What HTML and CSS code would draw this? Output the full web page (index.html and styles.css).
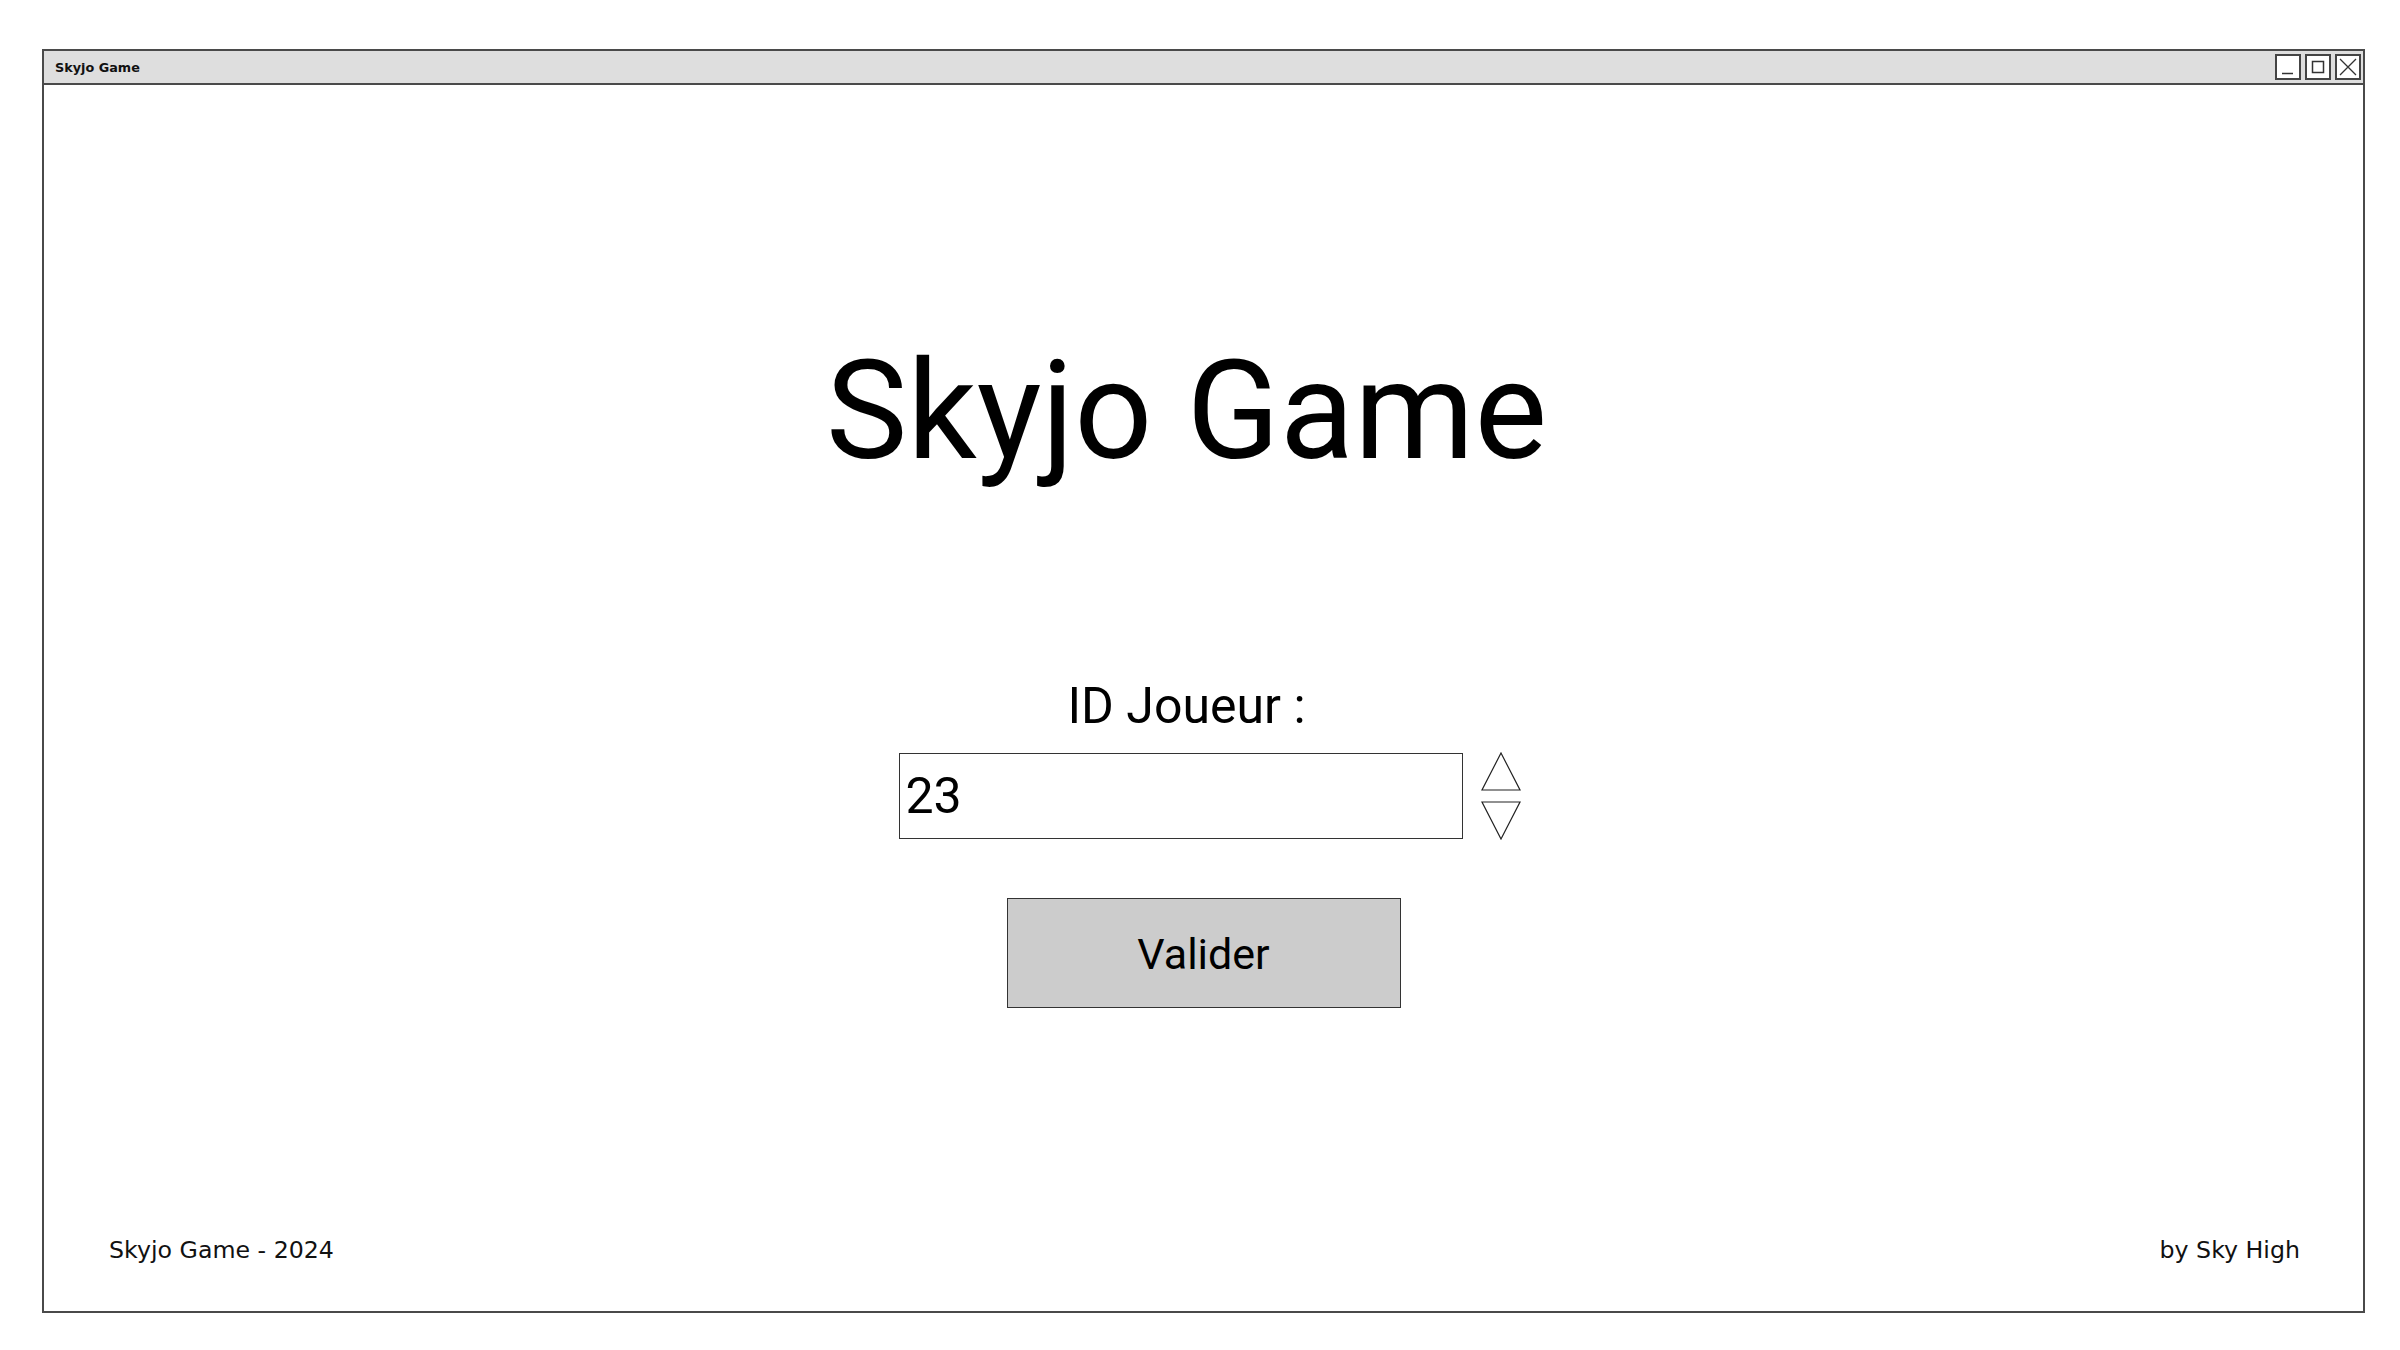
FILE: index.html
```html
<!DOCTYPE html>
<html lang="fr">
<head>
<meta charset="utf-8">
<title>Skyjo Game</title>
<link rel="stylesheet" href="styles.css">
</head>
<body>
<div class="window">
  <div class="titlebar">
    <span class="titlebar-text">Skyjo Game</span>
    <div class="controls">
      <span class="ctrl"><svg width="22" height="22" viewBox="0 0 22 22"><path d="M5 17.5 H16" stroke="#333" stroke-width="1.5" fill="none"/></svg></span>
      <span class="ctrl"><svg width="22" height="22" viewBox="0 0 22 22"><rect x="5.5" y="5.5" width="11" height="11" stroke="#333" stroke-width="1.5" fill="none"/></svg></span>
      <span class="ctrl"><svg width="22" height="22" viewBox="0 0 22 22"><path d="M3 3 L19 19 M19 3 L3 19" stroke="#333" stroke-width="1.3" fill="none"/></svg></span>
    </div>
  </div>
  <div class="content">
    <h1 class="title">Skyjo Game</h1>
    <div class="label">ID Joueur :</div>
    <div class="field-row">
      <div class="input">23</div>
      <div class="spinner">
        <svg width="40" height="40" viewBox="0 0 40 40"><path d="M20 1 L39 38 H1 Z" stroke="#222" stroke-width="1.2" fill="none"/></svg>
        <svg width="40" height="40" viewBox="0 0 40 40"><path d="M1 2 H39 L20 39 Z" stroke="#222" stroke-width="1.2" fill="none"/></svg>
      </div>
    </div>
    <div class="button">Valider</div>
    <div class="footer">
      <span class="footer-text">Skyjo Game - 2024</span>
      <span class="footer-text">by Sky High</span>
    </div>
  </div>
</div>
</body>
</html>
```

FILE: styles.css
```css
html, body {
  margin: 0;
  padding: 0;
  background: #ffffff;
}

.window {
  margin: 49px 0 0 42px;
  width: 2323px;
  height: 1264px;
  border: 2px solid #4a4a4a;
  box-sizing: border-box;
  display: flex;
  flex-direction: column;
  background: #ffffff;
}

.titlebar {
  height: 34px;
  box-sizing: border-box;
  background: #dedede;
  border-bottom: 2px solid #4a4a4a;
  display: flex;
  align-items: center;
  justify-content: space-between;
  padding: 0 2px 0 11px;
}

.titlebar-text {
  font-family: "DejaVu Sans", sans-serif;
  font-weight: bold;
  font-size: 12.8px;
  color: #111;
}

.controls {
  display: flex;
  gap: 4px;
}

.ctrl {
  width: 26px;
  height: 26px;
  box-sizing: border-box;
  border: 2px solid #444;
  background: #fff;
  display: flex;
  align-items: center;
  justify-content: center;
}

.content {
  flex: 1;
  display: flex;
  flex-direction: column;
  align-items: center;
  font-family: Roboto, "Liberation Sans", sans-serif;
  color: #000;
}

.title {
  margin: 258px 34px 0 0;
  font-weight: 400;
  font-size: 137px;
  line-height: 1;
}

.label {
  margin: 201px 34px 0 0;
  font-size: 50px;
  line-height: 1;
}

.field-row {
  margin: 21px 0 0 12px;
  display: flex;
  align-items: center;
  gap: 18px;
}

.input {
  width: 564px;
  height: 86px;
  box-sizing: border-box;
  border: 1.5px solid #333;
  font-size: 50px;
  line-height: 84px;
  padding-left: 6px;
}

.spinner {
  display: flex;
  flex-direction: column;
  gap: 8px;
}

.spinner svg {
  display: block;
}

.button {
  margin-top: 58px;
  width: 394px;
  height: 110px;
  box-sizing: border-box;
  background: #cccccc;
  border: 1.5px solid #333;
  display: flex;
  align-items: center;
  justify-content: center;
  font-size: 43px;
  padding-top: 2px;
}

.footer {
  margin-top: auto;
  align-self: stretch;
  display: flex;
  justify-content: space-between;
  padding: 0 63px 47px 65px;
}

.footer-text {
  font-family: "DejaVu Sans", sans-serif;
  font-size: 23.7px;
  color: #111;
}
```
